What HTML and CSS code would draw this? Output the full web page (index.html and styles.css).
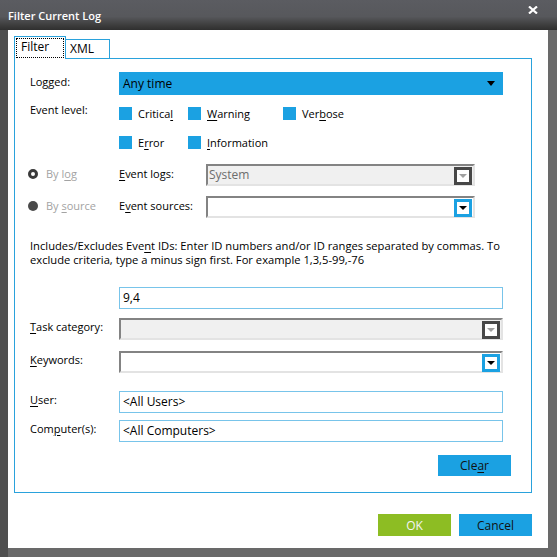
FILE: index.html
```html
<!DOCTYPE html>
<html lang="en">
<head>
    <meta charset="UTF-8">
    <title>Filter Current Log</title>
    <link rel="stylesheet" href="styles.css">
</head>
<body>

<div class="window">
    <div class="titlebar">
        <span class="title">Filter Current Log</span>
        <svg class="close" width="10" height="8" viewBox="0 0 10 8">
            <path d="M1 0.5 L9 7.5 M9 0.5 L1 7.5" stroke="#fff" stroke-width="2.2"/>
        </svg>
    </div>

    <div class="frame">
        <div class="dialog">
            <div class="tabs">
                <div class="tab active"><span class="focus">Filter</span></div>
                <div class="tab">XML</div>
            </div>

            <div class="panel">
                <div class="row row-logged">
                    <span class="lbl">Lo<u>g</u>ged:</span>
                    <div class="dropdown">Any time <span class="caret"></span></div>
                </div>

                <div class="row-level">
                    <span class="lbl">Event level:</span>
                    <div class="levels">
                        <span class="check"><i class="box"></i><span>Critica<u>l</u></span></span>
                        <span class="check"><i class="box"></i><span><u>W</u>arning</span></span>
                        <span class="check"><i class="box"></i><span>Ver<u>b</u>ose</span></span>
                        <span class="check"><i class="box"></i><span>E<u>r</u>ror</span></span>
                        <span class="check"><i class="box"></i><span><u>I</u>nformation</span></span>
                    </div>
                </div>

                <div class="row row-logs">
                    <span class="radio"><i class="dot ring"></i><span>By l<u>o</u>g</span></span>
                    <span class="lbl2"><u>E</u>vent logs:</span>
                    <div class="combo short disabled">
                        <span class="value">System</span>
                        <span class="btn"><i class="tri"></i></span>
                    </div>
                </div>

                <div class="row row-sources">
                    <span class="radio"><i class="dot filled"></i><span>By <u>s</u>ource</span></span>
                    <span class="lbl2">E<u>v</u>ent sources:</span>
                    <div class="combo short">
                        <span class="value"></span>
                        <span class="btn"><i class="tri"></i></span>
                    </div>
                </div>

                <div class="hint">
                    <span class="line">Includes/Excludes Eve<u>n</u>t IDs: Enter ID numbers and/or ID ranges separated by commas. To</span>
                    <span class="line">exclude criteria, type a minus sign first. For example 1,3,5-99,-76</span>
                </div>

                <div class="row row-ids">
                    <span class="lbl"></span>
                    <div class="textbox">9,4</div>
                </div>

                <div class="row row-task">
                    <span class="lbl"><u>T</u>ask category:</span>
                    <div class="combo disabled">
                        <span class="value"></span>
                        <span class="btn"><i class="tri"></i></span>
                    </div>
                </div>

                <div class="row row-keywords">
                    <span class="lbl"><u>K</u>eywords:</span>
                    <div class="combo">
                        <span class="value"></span>
                        <span class="btn"><i class="tri"></i></span>
                    </div>
                </div>

                <div class="row row-user">
                    <span class="lbl"><u>U</u>ser:</span>
                    <div class="textbox">&lt;All Users&gt;</div>
                </div>

                <div class="row row-computer">
                    <span class="lbl">Com<u>p</u>uter(s):</span>
                    <div class="textbox">&lt;All Computers&gt;</div>
                </div>

                <div class="clear-row">
                    <button class="btn-flat blue">Cle<u>a</u>r</button>
                </div>
            </div>

            <div class="footer">
                <button class="btn-flat green">OK</button>
                <button class="btn-flat blue">Cancel</button>
            </div>
        </div>
    </div>
</div>

</body>
</html>
```

FILE: styles.css
```css
body {
    margin: 0;
    background: #636363;
    font-family: 'Open Sans', 'Noto Sans', sans-serif;
    font-size: 11px;
    color: #000;
}
u { text-decoration-thickness: 1px; text-underline-offset: 2px; }

.window { width: 557px; height: 557px; }

.titlebar {
    height: 30px;
    display: flex;
    justify-content: space-between;
    padding: 0 19px 0 8px;
    background: linear-gradient(#5b5c61 0%, #57585c 55%, #3c3c3c 85%, #2f2f2f 100%);
    box-sizing: border-box;
}
.title {
    color: #fff;
    font-weight: 600;
    font-size: 11px;
    line-height: 14px;
    margin-top: 9px;
}
.close { margin-top: 6px; }

.frame {
    padding: 0 9px 9px 8px;
    background: linear-gradient(90deg, #4f4f4f 0, #4f4f4f 8px, #696969 8px);
}
.dialog {
    background: #fff;
    height: 518px;
    padding: 6px 16px 0 6px;
    box-sizing: border-box;
}

/* tabs */
.tabs { display: flex; align-items: flex-end; height: 22px; }
.tab {
    border: 1px solid #2aa2dc;
    border-bottom: none;
    box-sizing: border-box;
    height: 19px;
    padding: 0 4px;
    line-height: 18px;
    font-size: 12px;
    width: 45px;
}
.tab.active {
    width: 52px;
    height: 23px;
    margin-bottom: -1px;
    background: #fff;
    padding: 2px 2px 0 2px;
    position: relative;
    z-index: 1;
}
.tab.active + .tab { margin-left: -1px; }
.focus {
    display: block;
    outline: 1px dotted #000;
    height: 18px;
    line-height: 16px;
    padding-left: 4px;
}

.panel {
    border: 1px solid #2aa2dc;
    height: 435px;
    box-sizing: border-box;
    padding: 13px 28px 0 15px;
}

.row { display: flex; align-items: center; height: 22px; }
.lbl { width: 89px; flex: none; padding-bottom: 5px; }
.lbl2 { width: 87px; flex: none; padding-bottom: 3px; }

.row-logged { height: 23px; }
.dropdown {
    flex: 1;
    height: 23px;
    background: #1ba1e2;
    display: flex;
    align-items: center;
    justify-content: space-between;
    padding: 0 8px 0 4px;
    font-size: 12px;
}
.caret {
    border-left: 4px solid transparent;
    border-right: 4px solid transparent;
    border-top: 5px solid #000;
}

/* event levels */
.row-level { display: flex; margin-top: 8px; }
.row-level .lbl { line-height: 14px; padding: 0; }
.levels {
    display: grid;
    grid-template-columns: 69px 95px auto;
    row-gap: 16px;
    padding-top: 4px;
}
.check { display: flex; align-items: center; height: 13px; }
.box {
    width: 13px;
    height: 13px;
    background: #1ba1e2;
    margin-right: 6px;
}

/* radios */
.radio {
    width: 91px;
    margin-left: -2px;
    flex: none;
    display: flex;
    align-items: center;
    color: #a3a3a3;
    padding-bottom: 3px;
}
.dot {
    width: 10px;
    height: 10px;
    border-radius: 50%;
    box-sizing: border-box;
    margin-right: 8px;
}
.dot.ring { border: 3px solid #3a3a3a; }
.dot.filled { background: #4a4a4a; }

.row-logs { margin-top: 15px; }
.row-sources { margin-top: 10px; }

/* combos */
.combo {
    flex: 1;
    height: 22px;
    box-sizing: border-box;
    border-top: 2px solid #838383;
    border-left: 2px solid #838383;
    border-right: 2px solid #e3e3e3;
    border-bottom: 2px solid #e3e3e3;
    display: flex;
    align-items: center;
    justify-content: space-between;
    background: #fff;
}
.combo.short { flex: none; width: 269px; }
.combo.disabled { background: #f0f0f0; }
.value { padding-left: 1px; color: #6d6d6d; font-size: 12px; line-height: 16px; }
.btn {
    width: 18px;
    height: 18px;
    box-sizing: border-box;
    border: 3px solid #1ba1e2;
    background: #fff;
    display: flex;
    align-items: center;
    justify-content: center;
    margin-right: 1px;
    margin-top: 1px;
}
.combo.disabled .btn { border-color: #474747; }
.tri {
    border-left: 4px solid transparent;
    border-right: 4px solid transparent;
    border-top: 4px solid #000;
    margin-top: 1px;
}
.combo.disabled .tri { border-top-color: #a0a0a0; }

.hint {
    margin-top: 21px;
    line-height: 14px;
    font-size: 11.2px;
}
.hint .line { display: block; white-space: nowrap; }

.textbox {
    flex: 1;
    height: 22px;
    box-sizing: border-box;
    border: 1px solid #78c4ea;
    padding: 0 3px;
    line-height: 20px;
    font-size: 12px;
}
.row-ids { margin-top: 20px; }
.row-task { margin-top: 9px; }
.row-keywords { margin-top: 11px; }
.row-user { margin-top: 18px; }
.row-computer { margin-top: 7px; }

.clear-row {
    display: flex;
    justify-content: flex-end;
    margin: 13px -8px 0 0;
}

.btn-flat {
    width: 73px;
    height: 21px;
    border: none;
    padding: 0;
    font-family: 'Open Sans', 'Noto Sans', sans-serif;
    font-size: 12px;
    color: #111;
}
.btn-flat.blue { background: #1ba1e2; }
.btn-flat.green { background: #8dbd23; color: #f4f4f4; }

.footer {
    display: flex;
    justify-content: flex-end;
    gap: 8px;
    margin-top: 21px;
}
.footer .btn-flat { height: 22px; }
```
